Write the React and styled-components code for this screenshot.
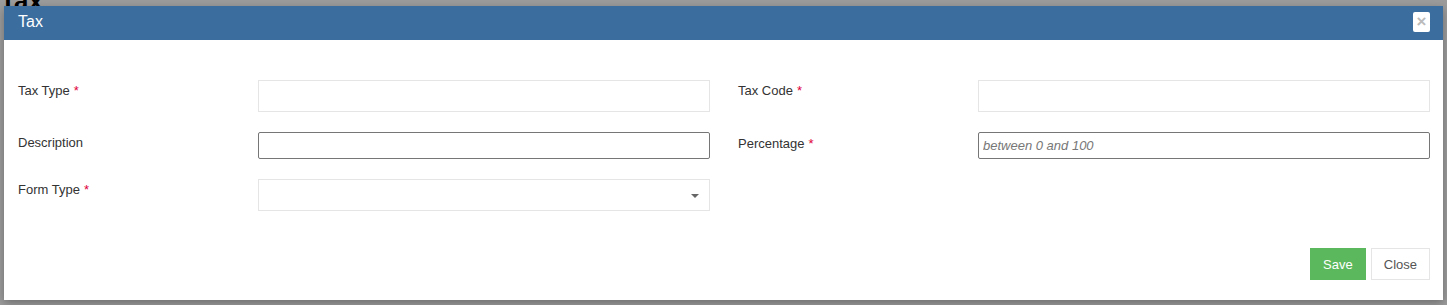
import React from 'react';
import styled, { createGlobalStyle } from 'styled-components';

const GlobalStyle = createGlobalStyle`
  html, body {
    margin: 0;
    padding: 0;
    background: #fff;
    font-family: "Liberation Sans", Arial, sans-serif;
  }
`;

const Page = styled.div`
  position: relative;
  width: 1447px;
  height: 305px;
  overflow: hidden;
`;

const PageTitle = styled.h1`
  margin: 0;
  position: absolute;
  top: -14px;
  left: 0;
  font-size: 26px;
  font-weight: bold;
  color: #000;
`;

const Backdrop = styled.div`
  position: absolute;
  inset: 0;
  background: rgba(0, 0, 0, 0.39);
`;

const Modal = styled.div`
  position: absolute;
  top: 6px;
  left: 4px;
  width: 1439px;
  height: 294px;
  background: #fff;
  display: flex;
  flex-direction: column;
  box-shadow: 0 3px 9px rgba(0, 0, 0, 0.3);
`;

const Header = styled.div`
  height: 34px;
  background: #3b6e9f;
  display: flex;
  align-items: center;
  justify-content: space-between;
  padding: 0 13px 0 14px;
  box-sizing: border-box;
`;

const Title = styled.h4`
  margin: 0;
  font-size: 16px;
  font-weight: normal;
  color: #fff;
  margin-top: -3px;
`;

const CloseX = styled.button`
  width: 17px;
  height: 20px;
  padding: 0;
  border: none;
  border-radius: 2px;
  background: #fff;
  color: #bbb;
  font-size: 17px;
  font-weight: bold;
  line-height: 18px;
  font-family: "Liberation Sans", Arial, sans-serif;
  cursor: pointer;
  margin-top: -2px;
`;

const Body = styled.div`
  padding: 40px 13px 0 14px;
  display: grid;
  grid-template-columns: 1fr 1fr;
  column-gap: 28px;
  row-gap: 20px;
`;

const Field = styled.div`
  display: flex;
  align-items: flex-start;
`;

const Label = styled.label`
  width: 240px;
  flex: none;
  padding-top: ${({ $offset }) => $offset ?? 3}px;
  font-size: 13px;
  color: #333;
`;

const Star = styled.span`
  color: #e0003a;
  margin-left: 4px;
`;

const TextInput = styled.input`
  flex: 1;
  box-sizing: border-box;
  height: ${({ $plain }) => ($plain ? 27 : 32)}px;
  margin: 0;
  border: 1px solid ${({ $plain }) => ($plain ? '#767676' : '#e5e5e5')};
  border-radius: ${({ $plain }) => ($plain ? 2 : 0)}px;
  padding: 0 4px;
  font-size: 13px;
  font-family: "Liberation Sans", Arial, sans-serif;
  color: #333;
  background: #fff;
  outline: none;

  &::placeholder {
    color: #777;
    font-style: italic;
  }
`;

const Select = styled.div`
  flex: 1;
  box-sizing: border-box;
  height: 32px;
  border: 1px solid #e5e5e5;
  display: flex;
  align-items: center;
  justify-content: flex-end;
  padding-right: 10px;
`;

const Caret = styled.span`
  width: 0;
  height: 0;
  border-left: 4px solid transparent;
  border-right: 4px solid transparent;
  border-top: 4px solid #666;
  margin-top: 2px;
`;

const Footer = styled.div`
  margin-top: auto;
  padding: 0 13px 20px;
  display: flex;
  justify-content: flex-end;
  gap: 5px;
`;

const Button = styled.button`
  height: 32px;
  padding: 0 12px;
  box-sizing: border-box;
  font-size: 13px;
  font-family: "Liberation Sans", Arial, sans-serif;
  border: 1px solid ${({ $primary }) => ($primary ? '#5cb85c' : '#e5e5e5')};
  background: ${({ $primary }) => ($primary ? '#5cb85c' : '#fff')};
  color: ${({ $primary }) => ($primary ? '#fff' : '#555')};
  cursor: pointer;
`;

const Required = () => <Star>*</Star>;

export default function App() {
  return (
    <Page>
      <GlobalStyle />
      <PageTitle>Tax</PageTitle>
      <Backdrop />
      <Modal>
        <Header>
          <Title>Tax</Title>
          <CloseX aria-label="close">×</CloseX>
        </Header>
        <Body>
          <Field>
            <Label>Tax Type<Required /></Label>
            <TextInput />
          </Field>
          <Field>
            <Label>Tax Code<Required /></Label>
            <TextInput />
          </Field>
          <Field>
            <Label $offset={3}>Description</Label>
            <TextInput $plain />
          </Field>
          <Field>
            <Label $offset={4}>Percentage<Required /></Label>
            <TextInput $plain placeholder="between 0 and 100" />
          </Field>
          <Field>
            <Label>Form Type<Required /></Label>
            <Select><Caret /></Select>
          </Field>
        </Body>
        <Footer>
          <Button $primary>Save</Button>
          <Button>Close</Button>
        </Footer>
      </Modal>
    </Page>
  );
}
